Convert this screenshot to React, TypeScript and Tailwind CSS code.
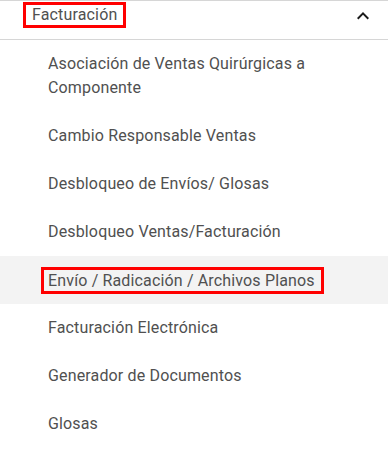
import React from "react";

const items = [
  "Asociación de Ventas Quirúrgicas a Componente",
  "Cambio Responsable Ventas",
  "Desbloqueo de Envíos/ Glosas",
  "Desbloqueo Ventas/Facturación",
  "Envío / Radicación / Archivos Planos",
  "Facturación Electrónica",
  "Generador de Documentos",
  "Glosas",
];

export default function App() {
  return (
    <div
      className="w-[388px] h-[452px] bg-white overflow-hidden text-[16px] text-[#505050] tracking-[0.15px]"
      style={{ fontFamily: "Roboto, 'Liberation Sans', sans-serif" }}
    >
      <div className="h-[40px] border-t border-b border-[#d6d6d6] flex items-start justify-between">
        <span className="mt-px ml-[23px] border-[3px] border-[#ff0000] px-[6px] leading-[20px]">
          Facturación
        </span>
        <svg
          className="mr-[13px] mt-[3px]"
          width="24"
          height="24"
          viewBox="0 0 24 24"
          fill="#1a1a1a"
        >
          <path d="M12 8l-6 6 1.41 1.41L12 10.83l4.59 4.58L18 14z" />
        </svg>
      </div>
      <ul>
        {items.map((t) =>
          t.startsWith("Envío") ? (
            <li key={t} className="bg-[#f3f3f3] h-[48px] flex items-center pl-[41px]">
              <span className="border-[3px] border-[#ff0000] pl-[4px] pr-[6px] leading-[21px]">
                {t}
              </span>
            </li>
          ) : (
            <li key={t} className="py-[12px] pl-[48px] pr-[40px] leading-[24px]">
              {t}
            </li>
          )
        )}
      </ul>
    </div>
  );
}
